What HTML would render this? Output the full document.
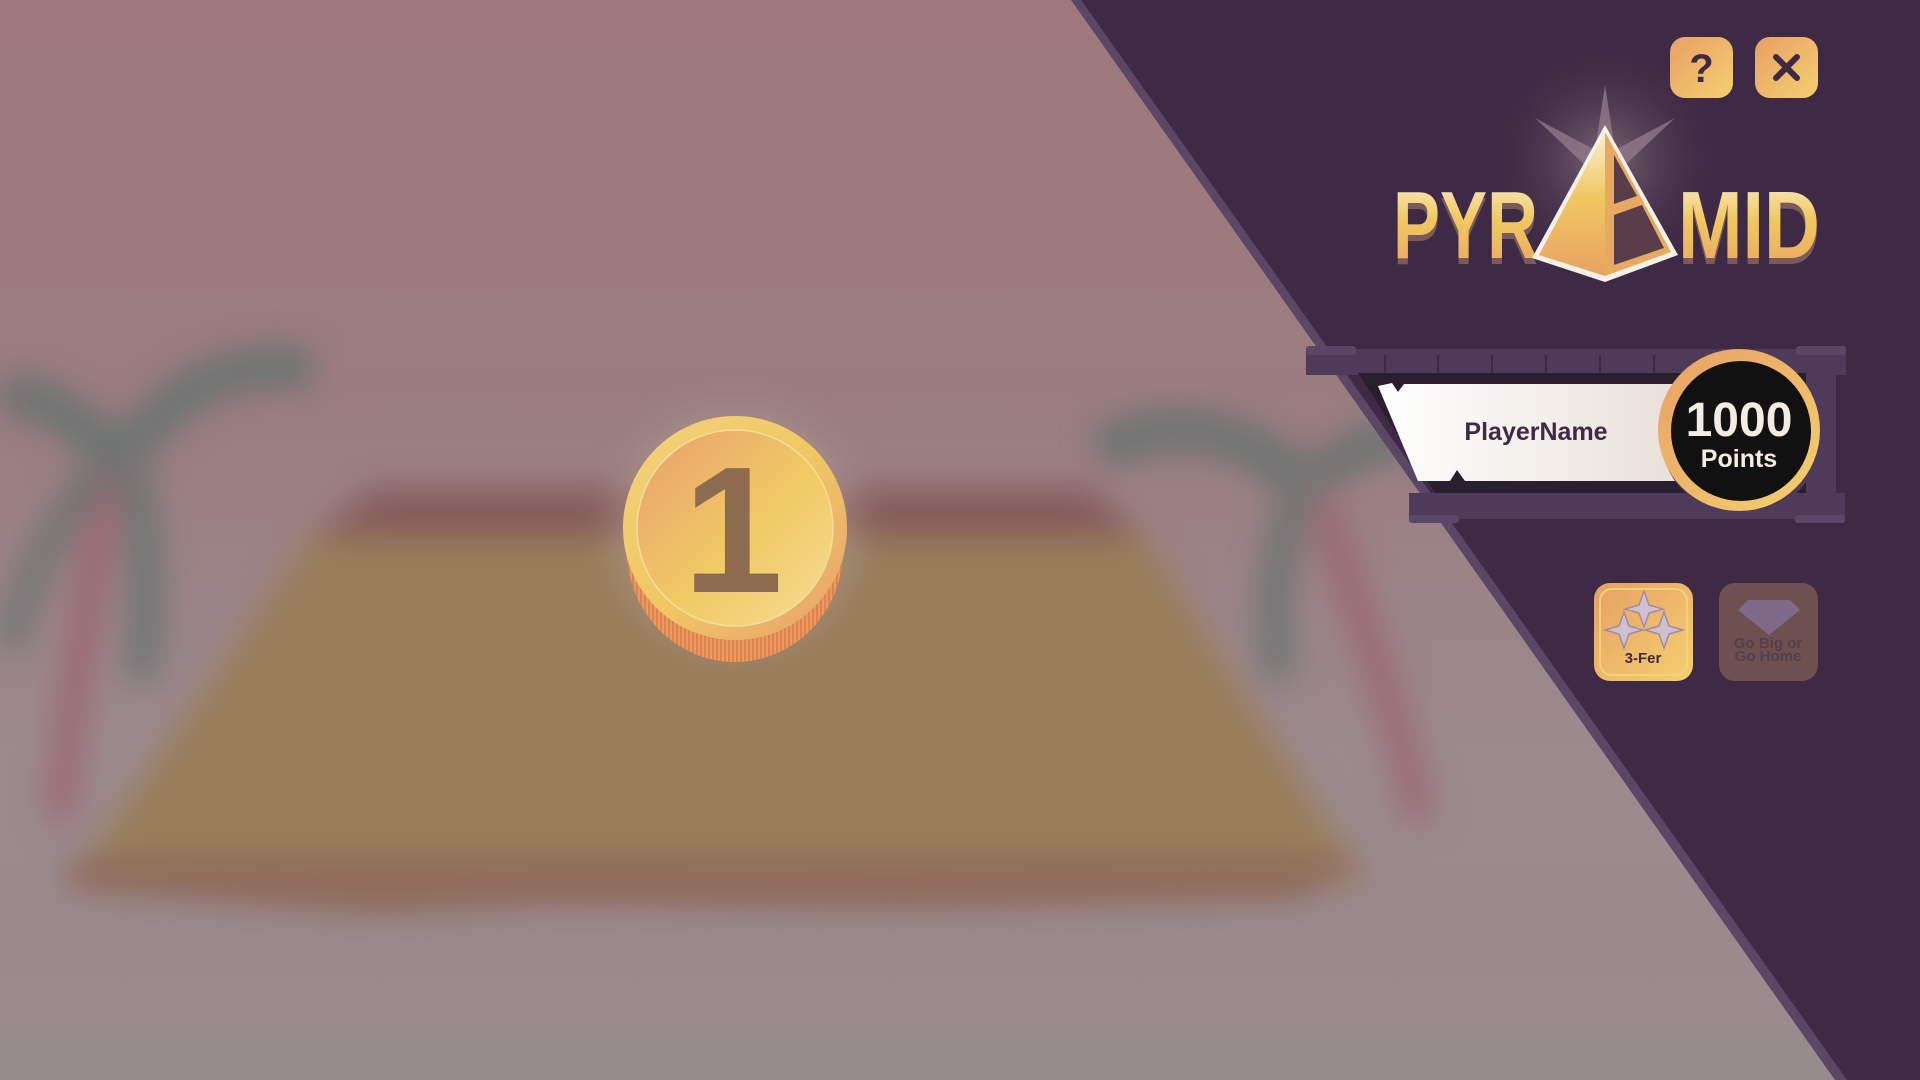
<!DOCTYPE html>
<html><head><meta charset="utf-8"><style>
html,body{margin:0;padding:0;width:1920px;height:1080px;overflow:hidden;font-family:"Liberation Sans",sans-serif;}
#scene{position:absolute;left:0;top:0;width:1920px;height:1080px;background:linear-gradient(#9e787c 0%,#9a7d80 40%,#9c8a8e 70%,#988b8e 100%);}
#blur{position:absolute;left:0;top:0;width:1920px;height:1080px;filter:blur(16px);}
.abs{position:absolute;}
</style></head><body>
<div id="scene">
 <div id="blur">
  <svg class="abs" width="1920" height="1080" style="left:0;top:0">
   <polygon points="316,530 1139,530 1368,885 67,885" fill="#987d5a"/>
   <polygon points="373,490 1090,490 1139,535 316,535" fill="#85595a"/>
   <polygon points="67,860 1368,860 1300,900 900,910 560,905 380,915 67,890" fill="#8f6a5a"/>
   <path d="M110,450 C90,600 70,700 60,820" stroke="#9b6670" stroke-width="28" fill="none"/>
   <path d="M120,460 C60,400 20,390 0,400" stroke="#6b7372" stroke-width="40" fill="none"/>
   <path d="M130,450 C180,380 240,360 310,370" stroke="#6b7372" stroke-width="40" fill="none"/>
   <path d="M130,460 C150,550 150,620 140,680" stroke="#6b7372" stroke-width="30" fill="none"/>
   <path d="M100,470 C40,540 20,600 10,650" stroke="#6b7372" stroke-width="26" fill="none"/>
   <path d="M1320,500 C1360,620 1400,720 1420,820" stroke="#9b6670" stroke-width="28" fill="none"/>
   <path d="M1300,480 C1230,420 1160,420 1100,450" stroke="#6b7372" stroke-width="40" fill="none"/>
   <path d="M1300,490 C1270,560 1270,640 1280,680" stroke="#6b7372" stroke-width="30" fill="none"/>
   <path d="M1310,480 C1360,440 1400,430 1440,440" stroke="#6b7372" stroke-width="36" fill="none"/>
   <ellipse cx="735" cy="530" rx="125" ry="125" fill="#b09a90" opacity=".5"/>
  </svg>
 </div>
</div>

<svg class="abs" style="left:600px;top:400px" width="280" height="290">
 <defs>
  <linearGradient id="cf" x1="0" y1="0" x2="1" y2="1"><stop offset="0" stop-color="#e8a06e"/><stop offset=".55" stop-color="#f0ca64"/><stop offset="1" stop-color="#f4dc96"/></linearGradient>
  <linearGradient id="cr" x1="0" y1="0" x2="1" y2="1"><stop offset="0" stop-color="#f3d27a"/><stop offset=".5" stop-color="#f0c864"/><stop offset="1" stop-color="#e8a06e"/></linearGradient>
  <pattern id="rid" width="4" height="10" patternUnits="userSpaceOnUse"><rect width="2" height="10" fill="#e0824e"/><rect x="2" width="2" height="10" fill="#eb9a62"/></pattern>
 </defs>
 <ellipse cx="135" cy="150" rx="108" ry="112" fill="url(#rid)"/>
 <ellipse cx="135" cy="128" rx="112" ry="112" fill="url(#cr)"/>
 <ellipse cx="135" cy="128" rx="98" ry="98" fill="url(#cf)" stroke="#f6de9a" stroke-width="1.5"/>
 <text x="133" y="192" text-anchor="middle" font-family="Liberation Sans" font-weight="bold" font-size="180" fill="#8c6b4f">1</text>
</svg>

<svg class="abs" style="left:0;top:0" width="1920" height="1080">
 <defs>
  <radialGradient id="glow" cx="0.5" cy="0.5" r="0.5"><stop offset="0" stop-color="#8c7480" stop-opacity=".8"/><stop offset="1" stop-color="#3f2a45" stop-opacity="0"/></radialGradient>
  <linearGradient id="gold" x1="0" y1="0" x2="0" y2="1"><stop offset="0" stop-color="#fbf0d0"/><stop offset=".45" stop-color="#f0c860"/><stop offset="1" stop-color="#e9a264"/></linearGradient>
  <linearGradient id="paper" x1="0" y1="0" x2="1" y2="0"><stop offset="0" stop-color="#ffffff"/><stop offset="1" stop-color="#e8e0d8"/></linearGradient>
  <linearGradient id="ring" x1="0" y1="0" x2="1" y2="1"><stop offset="0" stop-color="#e8a064"/><stop offset="1" stop-color="#f4d070"/></linearGradient>
 </defs>
 <polygon points="1071,0 1920,0 1920,1080 1835,1080" fill="#5a4766"/>
 <polygon points="1081,0 1920,0 1920,1080 1847,1080" fill="#3f2a45"/>
 <circle cx="1605" cy="160" r="120" fill="url(#glow)"/>
 <polygon points="1605,85 1615,150 1675,118 1625,165 1605,175 1585,165 1535,118 1595,150" fill="#9a8090" opacity=".7"/>
 <g font-family="Liberation Sans" font-weight="bold" font-size="96">
  <text x="1393" y="264" fill="#7a5a5a" textLength="145" lengthAdjust="spacingAndGlyphs">PYR</text>
  <text x="1393" y="258" fill="url(#gold)" textLength="145" lengthAdjust="spacingAndGlyphs">PYR</text>
  <text x="1678" y="264" fill="#7a5a5a" textLength="142" lengthAdjust="spacingAndGlyphs">MID</text>
  <text x="1678" y="258" fill="url(#gold)" textLength="142" lengthAdjust="spacingAndGlyphs">MID</text>
 </g>
 <polygon points="1605,125 1532,258 1605,282 1678,255" fill="#f5f0e8"/>
 <polygon points="1605,132 1539,255 1605,276" fill="url(#gold)"/>
 <polygon points="1605,132 1605,276 1671,252" fill="#e8aa62"/>
 <polygon points="1614,155 1614,265 1664,248 1642,205 1614,215 1614,204 1637,196" fill="#3f2a45" opacity=".85"/>
 <rect x="1670" y="37" width="63" height="61" rx="15" fill="url(#ring)"/>
 <text x="1701.5" y="82" text-anchor="middle" font-family="Liberation Sans" font-weight="bold" font-size="40" fill="#3f2a45">?</text>
 <rect x="1755" y="37" width="63" height="61" rx="15" fill="url(#ring)"/>
 <path d="M1776,57 L1797,78 M1797,57 L1776,78" stroke="#3f2a45" stroke-width="6" stroke-linecap="round"/>

 <rect x="1306" y="349" width="540" height="26" fill="#4e3b5a"/>
 <rect x="1306" y="346" width="50" height="9" rx="3" fill="#5a4766"/>
 <rect x="1796" y="346" width="50" height="9" rx="3" fill="#5a4766"/>
 <g stroke="#3f2a45" stroke-width="2">
  <line x1="1385" y1="355" x2="1385" y2="373"/><line x1="1438" y1="355" x2="1438" y2="373"/><line x1="1492" y1="355" x2="1492" y2="373"/><line x1="1546" y1="355" x2="1546" y2="373"/><line x1="1600" y1="355" x2="1600" y2="373"/><line x1="1654" y1="355" x2="1654" y2="373"/>
 </g>
 <polygon points="1358,373 1835,373 1835,493 1435,493" fill="#2a1f2e"/>
 <polygon points="1378,386 1392,383 1398,392 1404,384 1680,384 1680,481 1465,481 1457,470 1450,481 1418,481" fill="url(#paper)"/>
 <rect x="1806" y="373" width="30" height="122" fill="#4e3b5a"/>
 <rect x="1409" y="493" width="436" height="26" fill="#4e3b5a"/>
 <rect x="1409" y="515" width="50" height="8" rx="3" fill="#5a4766"/>
 <rect x="1795" y="515" width="50" height="8" rx="3" fill="#5a4766"/>
 <text x="1536" y="440" text-anchor="middle" font-family="Liberation Sans" font-weight="bold" font-size="25" fill="#3f2a45">PlayerName</text>
 <circle cx="1741" cy="434" r="81" fill="#4e3b5a"/>
 <circle cx="1739" cy="430" r="81" fill="url(#ring)"/>
 <circle cx="1741" cy="431" r="70" fill="#111"/>
 <text x="1739" y="436" text-anchor="middle" font-family="Liberation Sans" font-weight="bold" font-size="48" fill="#f3ece0">1000</text>
 <text x="1739" y="467" text-anchor="middle" font-family="Liberation Sans" font-weight="bold" font-size="25" fill="#f3ece0">Points</text>

 <rect x="1594" y="583" width="99" height="98" rx="16" fill="url(#ring)"/>
 <rect x="1600" y="589" width="87" height="86" rx="12" fill="none" stroke="#f4d27a" stroke-width="2"/>
 <g fill="#cfc0d0" stroke="#a08ca8" stroke-width="1.5">
  <path d="M1644,591 L1649,605 L1663,609 L1649,613 L1644,627 L1639,613 L1625,609 L1639,605 Z"/>
  <path d="M1624,612 L1629,626 L1643,630 L1629,634 L1624,648 L1619,634 L1605,630 L1619,626 Z"/>
  <path d="M1664,612 L1669,626 L1683,630 L1669,634 L1664,648 L1659,634 L1645,630 L1659,626 Z"/>
 </g>
 <text x="1643" y="663" text-anchor="middle" font-family="Liberation Sans" font-weight="bold" font-size="15" fill="#3f2a45">3-Fer</text>

 <rect x="1719" y="583" width="99" height="98" rx="16" fill="#6e5050"/>
 <polygon points="1748,600 1790,600 1800,610 1769,635 1738,610" fill="#7e6a86"/>
 <text x="1768" y="648" text-anchor="middle" font-family="Liberation Sans" font-weight="bold" font-size="15" fill="#54404a">Go Big or</text>
 <text x="1768" y="661" text-anchor="middle" font-family="Liberation Sans" font-weight="bold" font-size="15" fill="#54404a">Go Home</text>
</svg>
</body></html>
